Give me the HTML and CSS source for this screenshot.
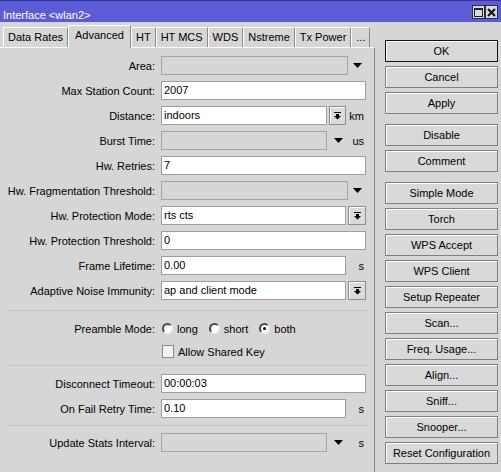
FILE: index.html
```html
<!DOCTYPE html>
<html>
<head>
<meta charset="utf-8">
<title>Interface &lt;wlan2&gt;</title>
<link rel="stylesheet" href="styles.css">
</head>
<body>
<div class="window">
  <div class="titlebar">
    <span class="title">Interface &lt;wlan2&gt;</span>
    <div class="tbtns">
      <span class="tbtn"><svg width="11" height="11" viewBox="0 0 11 11"><rect x="1.5" y="1.5" width="8" height="8" fill="none" stroke="#222" stroke-width="1"/><rect x="1" y="1" width="9" height="2" fill="#222"/></svg></span>
      <span class="tbtn"><svg width="11" height="11" viewBox="0 0 11 11"><path d="M2 2 L9 9 M9 2 L2 9" stroke="#111" stroke-width="2"/></svg></span>
    </div>
  </div>
  <div class="body">
    <div class="left">
      <div class="tabs">
        <div class="tab">Data Rates</div>
        <div class="tab active">Advanced</div>
        <div class="tab">HT</div>
        <div class="tab">HT MCS</div>
        <div class="tab">WDS</div>
        <div class="tab">Nstreme</div>
        <div class="tab">Tx Power</div>
        <div class="tab">...</div>
      </div>
      <div class="panel">
        <div class="group">
          <div class="row">
            <label class="lbl">Area:</label>
            <div class="ctl"><div class="field off"></div><span class="arrow"><svg width="9" height="5" viewBox="0 0 9 5"><polygon points="0,0 9,0 4.5,5" fill="#000"/></svg></span></div>
          </div>
          <div class="row">
            <label class="lbl">Max Station Count:</label>
            <div class="ctl"><div class="field">2007</div></div>
          </div>
          <div class="row">
            <label class="lbl">Distance:</label>
            <div class="ctl"><div class="field">indoors</div><span class="dd dd-s"><svg width="9" height="9" viewBox="0 0 9 9"><path d="M1 1h7v1H1z M3 3h3v2h2L4.5 8.5 1 5h2z" fill="#000"/></svg></span><span class="unit">km</span></div>
          </div>
          <div class="row">
            <label class="lbl">Burst Time:</label>
            <div class="ctl"><div class="field off"></div><span class="arrow arrow-u"><svg width="9" height="5" viewBox="0 0 9 5"><polygon points="0,0 9,0 4.5,5" fill="#000"/></svg></span><span class="unit">us</span></div>
          </div>
          <div class="row">
            <label class="lbl">Hw. Retries:</label>
            <div class="ctl"><div class="field">7</div></div>
          </div>
          <div class="row">
            <label class="lbl">Hw. Fragmentation Threshold:</label>
            <div class="ctl"><div class="field off"></div><span class="arrow"><svg width="9" height="5" viewBox="0 0 9 5"><polygon points="0,0 9,0 4.5,5" fill="#000"/></svg></span></div>
          </div>
          <div class="row">
            <label class="lbl">Hw. Protection Mode:</label>
            <div class="ctl"><div class="field">rts cts</div><span class="dd"><svg width="9" height="9" viewBox="0 0 9 9"><path d="M1 1h7v1H1z M3 3h3v2h2L4.5 8.5 1 5h2z" fill="#000"/></svg></span></div>
          </div>
          <div class="row">
            <label class="lbl">Hw. Protection Threshold:</label>
            <div class="ctl"><div class="field">0</div></div>
          </div>
          <div class="row">
            <label class="lbl">Frame Lifetime:</label>
            <div class="ctl"><div class="field">0.00</div><span class="unit">s</span></div>
          </div>
          <div class="row">
            <label class="lbl">Adaptive Noise Immunity:</label>
            <div class="ctl"><div class="field">ap and client mode</div><span class="dd"><svg width="9" height="9" viewBox="0 0 9 9"><path d="M1 1h7v1H1z M3 3h3v2h2L4.5 8.5 1 5h2z" fill="#000"/></svg></span></div>
          </div>
        </div>
        <div class="sep sep1"></div>
        <div class="group">
          <div class="row">
            <label class="lbl">Preamble Mode:</label>
            <div class="ctl radios">
              <span class="radio-item"><span class="radio"></span>long</span>
              <span class="radio-item"><span class="radio"></span>short</span>
              <span class="radio-item"><span class="radio checked"></span>both</span>
            </div>
          </div>
          <div class="row row-check">
            <span class="lbl"></span>
            <div class="ctl"><span class="check"></span>Allow Shared Key</div>
          </div>
        </div>
        <div class="sep sep2"></div>
        <div class="group">
          <div class="row">
            <label class="lbl">Disconnect Timeout:</label>
            <div class="ctl"><div class="field">00:00:03</div></div>
          </div>
          <div class="row">
            <label class="lbl">On Fail Retry Time:</label>
            <div class="ctl"><div class="field">0.10</div><span class="unit">s</span></div>
          </div>
        </div>
        <div class="sep sep3"></div>
        <div class="group">
          <div class="row">
            <label class="lbl">Update Stats Interval:</label>
            <div class="ctl"><div class="field off"></div><span class="arrow arrow-u"><svg width="9" height="5" viewBox="0 0 9 5"><polygon points="0,0 9,0 4.5,5" fill="#000"/></svg></span><span class="unit">s</span></div>
          </div>
        </div>
      </div>
    </div>
    <div class="buttons">
      <div class="bgroup">
        <div class="btn default">OK</div>
        <div class="btn">Cancel</div>
        <div class="btn">Apply</div>
      </div>
      <div class="bgroup">
        <div class="btn">Disable</div>
        <div class="btn">Comment</div>
      </div>
      <div class="bgroup">
        <div class="btn">Simple Mode</div>
        <div class="btn">Torch</div>
        <div class="btn">WPS Accept</div>
        <div class="btn">WPS Client</div>
        <div class="btn">Setup Repeater</div>
        <div class="btn">Scan...</div>
        <div class="btn">Freq. Usage...</div>
        <div class="btn">Align...</div>
        <div class="btn">Sniff...</div>
        <div class="btn">Snooper...</div>
        <div class="btn">Reset Configuration</div>
      </div>
    </div>
  </div>
</div>
</body>
</html>
```

FILE: styles.css
```css
html, body {
  margin: 0;
  padding: 0;
}
body {
  font-family: "Liberation Sans", Arial, sans-serif;
  font-size: 11px;
  color: #000;
  background: #d6d6d6;
  width: 501px;
  height: 472px;
  overflow: hidden;
}
.window {
  width: 501px;
  height: 472px;
  display: flex;
  flex-direction: column;
  background: #d6d6d6;
}
.titlebar {
  height: 22px;
  box-sizing: border-box;
  background: #5c5cd6;
  border-top: 1px solid #34349a;
  display: flex;
  justify-content: space-between;
  align-items: flex-start;
  padding: 0 3px;
  color: #fff;
}
.title {
  margin-top: 7px;
  line-height: 14px;
  font-size: 11px;
}
.tbtns {
  display: flex;
  margin-top: 4px;
}
.tbtn {
  width: 13px;
  height: 14px;
  box-sizing: border-box;
  border: 1px solid #2a2a4a;
  background: #d8d8d8;
  display: flex;
  align-items: center;
  justify-content: center;
}
.body {
  flex: 1;
  display: flex;
  padding-top: 3px;
  min-height: 0;
}
.left {
  width: 375px;
  display: flex;
  flex-direction: column;
}
.tabs {
  display: flex;
  align-items: flex-end;
  height: 22px;
  padding-left: 3px;
  position: relative;
  z-index: 1;
}
.tab {
  height: 20px;
  box-sizing: border-box;
  border-top: 1px solid #fff;
  border-left: 1px solid #fff;
  border-right: 1px solid #8a8a8a;
  padding: 0 4px;
  line-height: 19px;
  white-space: nowrap;
  background: #d6d6d6;
}
.tab.active {
  height: 23px;
  margin-bottom: -1px;
  line-height: 18px;
  padding: 0 6px;
}
.panel {
  flex: 1;
  border-top: 1px solid #fff;
  border-right: 1px solid #8a8a8a;
  padding-top: 8px;
  display: flex;
  flex-direction: column;
}
.group {
  display: flex;
  flex-direction: column;
  gap: 6px;
}
.row {
  display: flex;
  align-items: center;
  height: 19px;
}
.lbl {
  width: 155px;
  margin-right: 6px;
  text-align: right;
  white-space: nowrap;
  flex: none;
}
.ctl {
  width: 205px;
  height: 19px;
  display: flex;
  align-items: center;
  flex: none;
}
.field {
  flex: 1;
  height: 19px;
  box-sizing: border-box;
  border: 1px solid #9e9e9e;
  background: #fff;
  padding-left: 2px;
  line-height: 17px;
  white-space: nowrap;
  overflow: hidden;
}
.field.off {
  background: #d6d6d6;
  border-color: #a4a4a4;
}
.arrow {
  width: 18px;
  flex: none;
  display: flex;
  justify-content: center;
  align-items: center;
}
.arrow.arrow-u {
  width: 19px;
  justify-content: flex-end;
  padding-right: 3px;
  box-sizing: border-box;
}
.dd {
  width: 18px;
  height: 19px;
  margin-left: 2px;
  box-sizing: border-box;
  border: 1px solid #8c8c8c;
  box-shadow: inset 1px 1px 0 #fff;
  background: #dadada;
  display: flex;
  justify-content: center;
  align-items: center;
  flex: none;
}
.dd.dd-s {
  width: 17px;
}
.unit {
  width: 20px;
  flex: none;
  text-align: right;
  padding-right: 2px;
  box-sizing: border-box;
}
.sep {
  height: 0;
  border-top: 1px solid #c2c2c2;
  margin-left: 8px;
  margin-right: 6px;
}
.sep1 {
  margin-top: 10px;
  margin-bottom: 8px;
}
.sep2 {
  margin-top: 6px;
  margin-bottom: 8px;
}
.sep3 {
  margin-top: 7px;
  margin-bottom: 7px;
}
.radios {
  gap: 11px;
  padding-left: 1px;
}
.radio-item {
  display: flex;
  align-items: center;
  gap: 4px;
}
.radio {
  width: 11px;
  height: 11px;
  box-sizing: border-box;
  border-radius: 50%;
  border: 2px solid;
  border-color: #4a4a4a #eeeeee #eeeeee #4a4a4a;
  background: #fff;
  display: flex;
  align-items: center;
  justify-content: center;
}
.radio.checked::after {
  content: "";
  width: 3px;
  height: 3px;
  border-radius: 50%;
  background: #000;
}
.row-check {
  height: 15px;
}
.row-check .ctl {
  height: 15px;
  padding-left: 1px;
  box-sizing: border-box;
}
.check {
  width: 12px;
  height: 13px;
  box-sizing: border-box;
  border: 1px solid #8a8a8a;
  background: #f4f4f4;
  margin-right: 4px;
}
.buttons {
  margin-left: 10px;
  margin-top: 15px;
  width: 113px;
  display: flex;
  flex-direction: column;
  gap: 10px;
}
.bgroup {
  display: flex;
  flex-direction: column;
  gap: 4px;
}
.btn {
  height: 22px;
  box-sizing: border-box;
  border: 1px solid #808080;
  box-shadow: inset 1px 1px 0 #fff;
  background: #d9d9d9;
  text-align: center;
  line-height: 21px;
  white-space: nowrap;
}
.btn.default {
  border-color: #111;
}
```
